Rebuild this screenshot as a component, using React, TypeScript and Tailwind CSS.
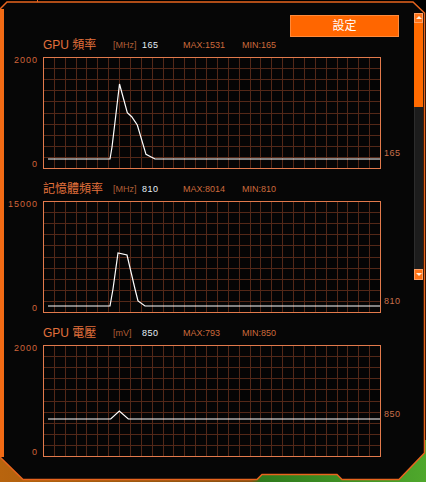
import React from 'react'

type Pt = [number, number]

type ChartDef = {
  title: string
  unit: string
  value: string
  max: string
  min: string
  top: string
  points: Pt[]
  valueClass: string
}

const charts: ChartDef[] = [
  {
    title: 'GPU 頻率',
    unit: '[MHz]',
    value: '165',
    max: 'MAX:1531',
    min: 'MIN:165',
    top: '2000',
    points: [
      [5, 102], [67, 102], [69, 90], [72, 65], [76.5, 27], [84.3, 55.7],
      [88.7, 59.7], [94.3, 68], [103, 97.3], [112, 102], [337, 102],
    ],
    valueClass: 'mt-[92px]',
  },
  {
    title: '記憶體頻率',
    unit: '[MHz]',
    value: '810',
    max: 'MAX:8014',
    min: 'MIN:810',
    top: '15000',
    points: [
      [5, 105], [67, 105], [70, 88], [75, 52], [84, 54], [92, 88],
      [95, 100], [102, 105], [337, 105],
    ],
    valueClass: 'mt-[96px]',
  },
  {
    title: 'GPU 電壓',
    unit: '[mV]',
    value: '850',
    max: 'MAX:793',
    min: 'MIN:850',
    top: '2000',
    points: [[5, 74], [67.7, 74], [76.3, 66], [85.3, 74], [337, 74]],
    valueClass: 'mt-[65px]',
  },
]

const W = 338
const H = 112
const cols = Array.from({ length: 30 }, (_, i) => Math.round(((i + 1) * 337) / 31) + 0.5)
const rows = Array.from({ length: 9 }, (_, i) => Math.round(((i + 1) * 111) / 10) + 0.5)

function Plot({ points }: { points: Pt[] }) {
  return (
    <svg width={W} height={H} className="block shrink-0" shapeRendering="crispEdges">
      <rect x={0} y={0} width={W} height={H} fill="#050505" />
      {cols.map((x) => (
        <line key={'c' + x} x1={x} y1={0} x2={x} y2={H} stroke="#532818" strokeWidth={1} />
      ))}
      {rows.map((y) => (
        <line key={'r' + y} x1={0} y1={y} x2={W} y2={y} stroke="#532818" strokeWidth={1} />
      ))}
      <rect x={0.5} y={0.5} width={W - 1} height={H - 1} fill="none" stroke="#e27a4c" strokeWidth={1} />
      <polyline
        points={points.map((p) => p.join(',')).join(' ')}
        fill="none"
        stroke="#ffffff"
        strokeWidth={1.2}
        shapeRendering="geometricPrecision"
      />
    </svg>
  )
}

function ChartBlock({ c }: { c: ChartDef }) {
  return (
    <div className="flex flex-col">
      {/* header */}
      <div className="flex h-[16px] items-center pl-[43px] leading-none">
        <span className="w-[70px] text-[12px] text-[#e2713c]">{c.title}</span>
        <span className="w-[29px] text-[9px] text-[#b05e36]">{c.unit}</span>
        <span className="w-[41px] text-[9px] tracking-[0.5px] text-[#e4eef6]">{c.value}</span>
        <span className="w-[59px] text-[9px] text-[#cc6a3c]">{c.max}</span>
        <span className="text-[9px] text-[#cc6a3c]">{c.min}</span>
      </div>
      {/* plot row */}
      <div className="mt-[4px] flex">
        <div className="flex w-[43px] flex-col items-end justify-between pr-[5px] text-[9px] leading-none tracking-[1px] text-[#d0653a]">
          <span className="-mt-[1px]">{c.top}</span>
          <span>0</span>
        </div>
        <Plot points={c.points} />
        <div className="pl-[3px] text-[9px] leading-none tracking-[0.5px] text-[#c8704a]">
          <div className={c.valueClass}>{c.value}</div>
        </div>
      </div>
    </div>
  )
}

function Frame() {
  return (
    <svg className="absolute inset-0" width={426} height={482}>
      <defs>
        <linearGradient id="outside" x1="0" x2="1" y1="0" y2="0">
          <stop offset="0" stopColor="#b8640e" />
          <stop offset="0.59" stopColor="#8a5010" />
          <stop offset="0.61" stopColor="#2e7a1c" />
          <stop offset="1" stopColor="#4fa82c" />
        </linearGradient>
      </defs>
      <rect x={0} y={440} width={426} height={42} fill="url(#outside)" />
      <polygon
        points="0,9 7,2 413,2 424.5,13 424.5,453 399,479.5 342,479.5 337,474.5 262,474.5 257,479.5 23,479.5 0,457"
        fill="#060606"
        stroke="#e8641e"
        strokeWidth={1.5}
      />
      <rect x={0} y={9} width={4} height={448} fill="#f26a14" />
      <line x1={37.5} y1={0} x2={37.5} y2={2} stroke="#e8641e" />
    </svg>
  )
}

export default function App() {
  return (
    <div className="relative h-[482px] w-[426px] overflow-hidden bg-black font-['Liberation_Sans','Noto_Sans_CJK_TC',sans-serif]">
      <Frame />
      <div className="relative flex">
        {/* main content */}
        <div className="flex w-[413px] flex-col">
          <div className="mt-[15px] flex justify-end pr-[14px]">
            <button className="flex h-[22px] w-[109px] items-center justify-center border border-[#ff8a3a] bg-[#ff6600] text-[12px] text-white">
              設定
            </button>
          </div>
          <div className="flex flex-col gap-[12px]">
            {charts.map((c) => (
              <ChartBlock key={c.title} c={c} />
            ))}
          </div>
        </div>
        {/* scrollbar */}
        <div className="ml-[1px] mt-[13px] flex w-[9px] flex-col">
          <div className="flex h-[10px] items-start justify-center border border-[#ffa066] bg-[#ff7418] pt-[2px]">
            <div className="h-0 w-0 border-x-[3px] border-b-[3px] border-x-transparent border-b-[#fff0e0]" />
          </div>
          <div className="h-[84px] bg-[#ff6a00]" />
          <div className="h-[162px] border-l border-[#2c2c2c] bg-[#1c1c1c]" />
          <div className="flex h-[11px] items-center justify-center border border-[#ffa066] bg-[#ff7418]">
            <div className="h-0 w-0 border-x-[3px] border-t-[3px] border-x-transparent border-t-[#fff0e0]" />
          </div>
        </div>
      </div>
    </div>
  )
}
